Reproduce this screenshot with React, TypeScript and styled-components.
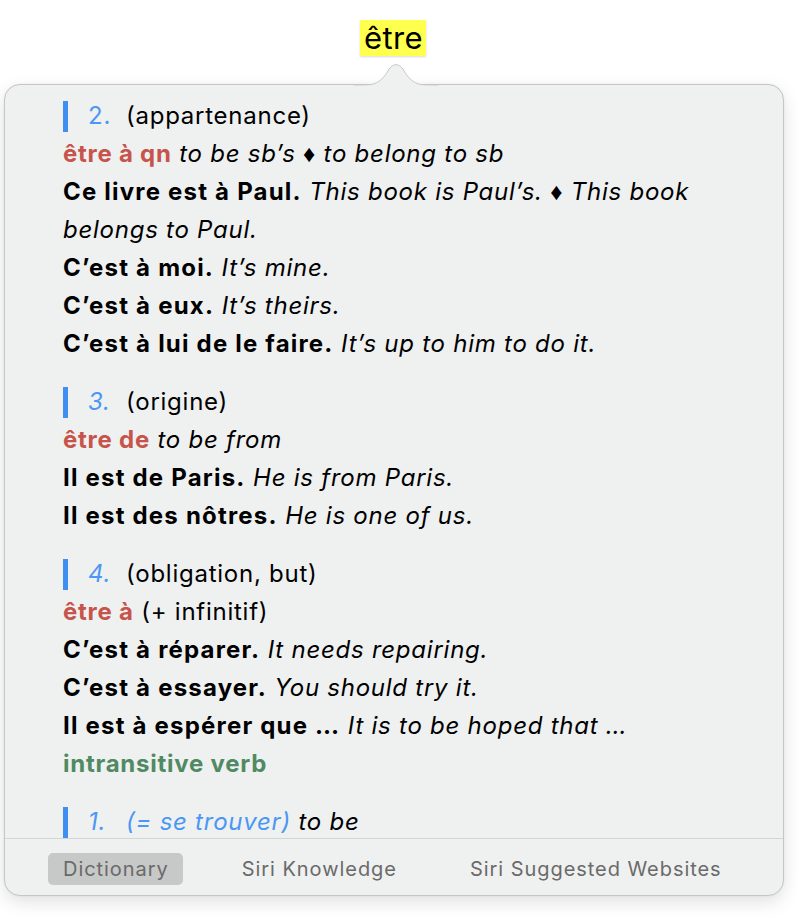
import React from "react";
import styled, { createGlobalStyle } from "styled-components";

const GlobalStyle = createGlobalStyle`
  html, body {
    margin: 0;
    padding: 0;
    background: #ffffff;
  }
  body {
    font-family: Inter, "Noto Sans", "Liberation Sans", sans-serif;
  }
`;

const Page = styled.div`
  width: 798px;
  height: 924px;
  padding: 20px 0 0 4px;
  box-sizing: border-box;
  position: relative;
`;

const WordRow = styled.div`
  display: flex;
  padding-left: 356px;
  height: 40px;
  align-items: flex-start;
`;

const Word = styled.span`
  background: #ffff4d;
  color: #000;
  font-size: 31px;
  line-height: 36px;
  padding: 0 3px 0 4px;
  height: 36px;
  letter-spacing: 0.4px;
  box-shadow: 0 1px 2px rgba(0, 0, 0, 0.15);
`;

const Popover = styled.div`
  margin-top: 24px;
  width: 780px;
  height: 812px;
  box-sizing: border-box;
  background: #eff0f0;
  border: 1px solid #c6c6c6;
  border-radius: 16px;
  box-shadow: 0 6px 18px rgba(0, 0, 0, 0.12), 0 0 2px rgba(0, 0, 0, 0.08);
  display: flex;
  flex-direction: column;
  position: relative;
`;

const Tip = styled.svg`
  position: absolute;
  left: 349px;
  top: -23px;
  width: 84px;
  height: 24px;
  overflow: visible;
`;

const Content = styled.div`
  flex: 1;
  overflow: hidden;
  padding: 12px 60px 0 58px;
  display: flex;
  flex-direction: column;
  gap: 20px;
  border-bottom: 1px solid #d4d5d5;
`;

const Block = styled.div`
  display: flex;
  flex-direction: column;
`;

const Row = styled.div`
  font-size: 24px;
  line-height: 38px;
  letter-spacing: 0.75px;
  color: #000;
`;

const SenseRow = styled(Row)`
  display: flex;
  align-items: center;
`;

const Bar = styled.span`
  width: 5px;
  height: 31px;
  background: #3f8ef2;
  margin-right: 20px;
`;

const Num = styled.span<{ $italic: boolean }>`
  color: #4a97f5;
  font-style: ${(p) => (p.$italic ? "italic" : "normal")};
  width: 38px;
`;

const Plain = styled.span`
  font-weight: 400;
  font-style: normal;
`;

const Phrase = styled.span`
  color: #c6544b;
  font-weight: 700;
`;

const B = styled.span`
  font-weight: 700;
  letter-spacing: 1.2px;
`;

const I = styled.span`
  font-style: italic;
`;

const Gloss = styled.span`
  color: #4a97f5;
  font-style: italic;
`;

const PartOfSpeech = styled.span`
  color: #4f8a64;
  font-weight: 700;
`;

const TabBar = styled.div`
  height: 56px;
  flex: none;
  display: flex;
  align-items: center;
  padding: 3px 0 0 43px;
  box-sizing: border-box;
  gap: 44px;
`;

const Tab = styled.div<{ $active: boolean }>`
  font-size: 20px;
  letter-spacing: 0.95px;
  color: #6a6a6a;
  height: 32px;
  line-height: 32px;
  padding: 0 14px 0 15px;
  border-radius: 5px;
  white-space: nowrap;
  background: ${(p) => (p.$active ? "#c7c8c8" : "transparent")};
`;

type Line =
  | { kind: "sense"; num: string; italic: boolean; label: React.ReactNode }
  | { kind: "text"; content: React.ReactNode };

const buildSections = (): Line[][] => [
  [
    { kind: "sense", num: "2.", italic: false, label: <Plain>(appartenance)</Plain> },
    {
      kind: "text",
      content: (
        <>
          <Phrase>être à qn</Phrase> <I>to be sb’s ♦ to belong to sb</I>
        </>
      ),
    },
    {
      kind: "text",
      content: (
        <>
          <B>Ce livre est à Paul.</B> <I>This book is Paul’s. ♦ This book belongs to Paul.</I>
        </>
      ),
    },
    { kind: "text", content: <><B>C’est à moi.</B> <I>It’s mine.</I></> },
    { kind: "text", content: <><B>C’est à eux.</B> <I>It’s theirs.</I></> },
    {
      kind: "text",
      content: <><B>C’est à lui de le faire.</B> <I>It’s up to him to do it.</I></>,
    },
  ],
  [
    { kind: "sense", num: "3.", italic: true, label: <Plain>(origine)</Plain> },
    { kind: "text", content: <><Phrase>être de</Phrase> <I>to be from</I></> },
    { kind: "text", content: <><B>Il est de Paris.</B> <I>He is from Paris.</I></> },
    { kind: "text", content: <><B>Il est des nôtres.</B> <I>He is one of us.</I></> },
  ],
  [
    { kind: "sense", num: "4.", italic: true, label: <Plain>(obligation, but)</Plain> },
    { kind: "text", content: <><Phrase>être à</Phrase> <Plain>(+ infinitif)</Plain></> },
    { kind: "text", content: <><B>C’est à réparer.</B> <I>It needs repairing.</I></> },
    { kind: "text", content: <><B>C’est à essayer.</B> <I>You should try it.</I></> },
    {
      kind: "text",
      content: <><B>Il est à espérer que …</B> <I>It is to be hoped that …</I></>,
    },
    { kind: "text", content: <PartOfSpeech>intransitive verb</PartOfSpeech> },
  ],
  [
    {
      kind: "sense",
      num: "1.",
      italic: true,
      label: (
        <>
          <Gloss>(= se trouver)</Gloss> <I>to be</I>
        </>
      ),
    },
    { kind: "text", content: <><B>Il est à Paris.</B> <I>He is in Paris.</I></> },
  ],
];

const tabs = [
  { label: "Dictionary", active: true },
  { label: "Siri Knowledge", active: false },
  { label: "Siri Suggested Websites", active: false },
];

export default function App() {
  const sections = buildSections();
  return (
    <>
      <GlobalStyle />
      <Page>
        <WordRow>
          <Word>être</Word>
        </WordRow>
        <Popover>
          <Tip viewBox="0 0 84 24" aria-hidden>
            <path
              d="M0 23.5 C 18 23.5, 26 23.5, 35 7 Q 42 -2, 49 7 C 58 23.5, 66 23.5, 84 23.5"
              fill="#eff0f0"
              stroke="#c9c9c9"
              strokeWidth="1"
            />
            <rect x="-1" y="23.5" width="86" height="2" fill="#eff0f0" />
          </Tip>
          <Content>
            {sections.map((lines, i) => (
              <Block key={i}>
                {lines.map((l, j) =>
                  l.kind === "sense" ? (
                    <SenseRow key={j}>
                      <Bar />
                      <Num $italic={l.italic}>{l.num}</Num>
                      <span>{l.label}</span>
                    </SenseRow>
                  ) : (
                    <Row key={j}>{l.content}</Row>
                  )
                )}
              </Block>
            ))}
          </Content>
          <TabBar>
            {tabs.map((t) => (
              <Tab key={t.label} $active={t.active}>
                {t.label}
              </Tab>
            ))}
          </TabBar>
        </Popover>
      </Page>
    </>
  );
}
